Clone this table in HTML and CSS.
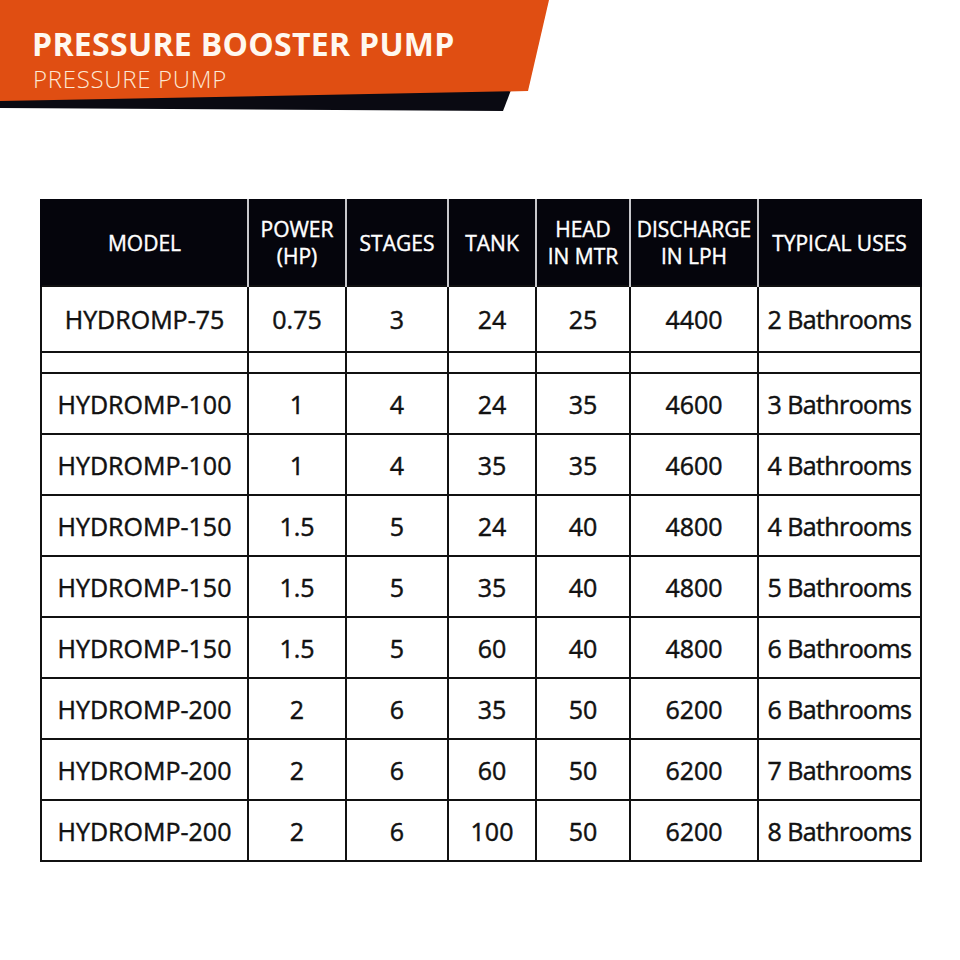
FILE: index.html
```html
<!DOCTYPE html>
<html>
<head>
<meta charset="utf-8">
<link rel="stylesheet" href="styles.css">
</head>
<body>
<header class="banner">
  <svg class="banner-bg" width="560" height="112" viewBox="0 0 560 112">
    <polygon points="0,99 511,90 503,111 0,108" fill="#0a0a12"/>
    <polygon points="0,0 549,0 528,91 0,101" fill="#e04e12"/>
  </svg>
  <h1 class="title">PRESSURE BOOSTER PUMP</h1>
  <p class="subtitle">PRESSURE PUMP</p>
</header>
<main class="wrap">
  <table class="specs">
    <colgroup>
      <col class="c1"><col class="c2"><col class="c3"><col class="c4"><col class="c5"><col class="c6"><col class="c7">
    </colgroup>
    <thead>
      <tr>
        <th>MODEL</th>
        <th>POWER<br>(HP)</th>
        <th>STAGES</th>
        <th>TANK</th>
        <th>HEAD<br>IN MTR</th>
        <th>DISCHARGE<br>IN LPH</th>
        <th>TYPICAL USES</th>
      </tr>
    </thead>
    <tbody>
      <tr class="first"><td>HYDROMP-75</td><td>0.75</td><td>3</td><td>24</td><td>25</td><td>4400</td><td>2 Bathrooms</td></tr>
      <tr class="spacer"><td></td><td></td><td></td><td></td><td></td><td></td><td></td></tr>
      <tr><td>HYDROMP-100</td><td>1</td><td>4</td><td>24</td><td>35</td><td>4600</td><td>3 Bathrooms</td></tr>
      <tr><td>HYDROMP-100</td><td>1</td><td>4</td><td>35</td><td>35</td><td>4600</td><td>4 Bathrooms</td></tr>
      <tr><td>HYDROMP-150</td><td>1.5</td><td>5</td><td>24</td><td>40</td><td>4800</td><td>4 Bathrooms</td></tr>
      <tr><td>HYDROMP-150</td><td>1.5</td><td>5</td><td>35</td><td>40</td><td>4800</td><td>5 Bathrooms</td></tr>
      <tr><td>HYDROMP-150</td><td>1.5</td><td>5</td><td>60</td><td>40</td><td>4800</td><td>6 Bathrooms</td></tr>
      <tr><td>HYDROMP-200</td><td>2</td><td>6</td><td>35</td><td>50</td><td>6200</td><td>6 Bathrooms</td></tr>
      <tr><td>HYDROMP-200</td><td>2</td><td>6</td><td>60</td><td>50</td><td>6200</td><td>7 Bathrooms</td></tr>
      <tr><td>HYDROMP-200</td><td>2</td><td>6</td><td>100</td><td>50</td><td>6200</td><td>8 Bathrooms</td></tr>
    </tbody>
  </table>
</main>
</body>
</html>
```

FILE: styles.css
```css
html, body {
  margin: 0;
  padding: 0;
  background: #ffffff;
}
body {
  width: 960px;
  height: 960px;
  font-family: "Open Sans", "Liberation Sans", sans-serif;
  color: #111111;
}
.banner {
  position: relative;
  height: 112px;
  padding: 0 0 0 32px;
  box-sizing: border-box;
}
.banner-bg {
  position: absolute;
  left: 0;
  top: 0;
  z-index: 0;
}
.title {
  position: relative;
  margin: 0;
  padding-top: 24px;
  font-size: 32px;
  line-height: 40px;
  font-weight: 700;
  color: #fff8ef;
  letter-spacing: 0.3px;
}
.subtitle {
  position: relative;
  margin: 0;
  padding-left: 1px;
  font-size: 24px;
  line-height: 30px;
  font-weight: 300;
  color: #fde8d4;
  letter-spacing: 0.7px;
}
.wrap {
  padding: 87px 0 0 40px;
}
.specs {
  border-collapse: collapse;
  table-layout: fixed;
  width: 880px;
}
.c1 { width: 207px; }
.c2 { width: 98px; }
.c3 { width: 102px; }
.c4 { width: 88px; }
.c5 { width: 94px; }
.c6 { width: 128px; }
.c7 { width: 163px; }
.specs th {
  background: #05050c;
  color: #ffffff;
  font-weight: 400;
  font-size: 21px;
  line-height: 27px;
  height: 84px;
  padding: 0;
  text-align: center;
  -webkit-text-stroke: 0.4px #ffffff;
  border-left: 2px solid #c8c8cc;
  border-right: 2px solid #c8c8cc;
  border-top: 2px solid #05050c;
}
.specs th:first-child { border-left: 2px solid #05050c; }
.specs th:last-child { border-right: 2px solid #05050c; }
.specs td {
  border: 2px solid #111111;
  text-align: center;
  font-size: 25px;
  font-weight: 400;
  -webkit-text-stroke: 0.45px #111111;
  height: 59px;
  padding: 0;
}
.specs td:last-child {
  letter-spacing: -0.6px;
}
.specs tr.first td { height: 64px; }
.specs tr.spacer td { height: 19px; }
```
